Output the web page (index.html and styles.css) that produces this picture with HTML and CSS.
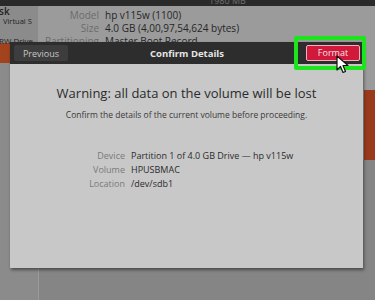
FILE: index.html
```html
<!DOCTYPE html>
<html lang="en">
<head>
    <meta charset="UTF-8">
    <meta name="viewport" content="width=device-width, initial-scale=1.0">
    <title>Confirm Details - Disks</title>
    <link rel="stylesheet" href="styles.css">
</head>
<body>
    <div class="topbar"><span>1980 MB</span></div>

    <div class="app">
        <div class="sidebar">
            <div class="drive">
                <div class="drive-name">Disk</div>
                <div class="drive-sub">Virtual S</div>
            </div>
            <div class="drive drive-cd">
                <div class="drive-name">RW Drive</div>
            </div>
            <div class="drive selected"></div>
        </div>

        <div class="main">
            <div class="info">
                <div class="info-row"><span class="info-label">Model</span><span class="info-value">hp v115w (1100)</span></div>
                <div class="info-row"><span class="info-label">Size</span><span class="info-value">4.0 GB (4,00,97,54,624 bytes)</span></div>
                <div class="info-row"><span class="info-label">Partitioning</span><span class="info-value">Master Boot Record</span></div>
            </div>
            <div class="volumes">
                <div class="volume"></div>
            </div>
        </div>
    </div>

    <div class="dialog">
        <div class="dialog-header">
            <button class="btn btn-prev">Previous</button>
            <div class="dialog-title">Confirm Details</div>
            <button class="btn btn-format">Format</button>
        </div>
        <div class="dialog-body">
            <h1 class="warning">Warning: all data on the volume will be lost</h1>
            <p class="note">Confirm the details of the current volume before proceeding.</p>

            <div class="details">
                <span class="label">Device</span><span class="value">Partition 1 of 4.0 GB Drive — hp v115w</span>
                <span class="label">Volume</span><span class="value">HPUSBMAC</span>
                <span class="label">Location</span><span class="value">/dev/sdb1</span>
            </div>
        </div>
    </div>

    <!-- highlight drawn over the screenshot -->
    <div class="highlight"></div>

    <svg class="cursor" width="13" height="19" viewBox="0 0 13 19">
        <path d="M1 1 L1 15 L4.5 11.5 L7 17.5 L9.5 16.5 L7 10.5 L12 10.5 Z" fill="#fff" stroke="#111" stroke-width="1.2" stroke-linejoin="round"/>
    </svg>
</body>
</html>
```

FILE: styles.css
```css
* {
    margin: 0;
    padding: 0;
    box-sizing: border-box;
}

body {
    font-family: 'Open Sans', 'DejaVu Sans', sans-serif;
    background: #858585;
    width: 375px;
    height: 300px;
    overflow: hidden;
    position: relative;
}

.topbar {
    height: 6px;
    background: #2a2a2a;
    color: #6f6f6f;
    font-size: 9px;
    line-height: 1px;
    text-align: center;
    overflow: hidden;
    padding-left: 80px;
}

.app {
    display: flex;
    height: 294px;
}

.sidebar {
    width: 39px;
    flex-shrink: 0;
    background: #8b8b8b;
    border-right: 1px solid #9a9a9a;
    overflow: hidden;
}

.drive {
    white-space: nowrap;
    color: #1f1f1f;
}

.drive-name {
    font-size: 10px;
    font-weight: 600;
    line-height: 11px;
    margin-left: -11px;
}

.drive-sub {
    font-size: 7.5px;
    line-height: 9px;
    padding-left: 3px;
}

.drive-cd {
    margin-top: 10px;
}

.drive-cd .drive-name {
    font-size: 8px;
    font-weight: 400;
    line-height: 9px;
    margin-left: -1px;
}

.drive.selected {
    height: 20px;
    margin-top: -2px;
    background: #a3431e;
}

.main {
    flex: 1;
    display: flex;
    flex-direction: column;
}

.info {
    background: #9b9b9b;
    padding-top: 3px;
    height: 84px;
}

.info-row {
    display: flex;
    gap: 6px;
    font-size: 10px;
    line-height: 13px;
    white-space: nowrap;
}

.info-label {
    width: 60px;
    text-align: right;
    color: #6b6b6b;
}

.info-value {
    color: #262626;
}

.volumes {
    background: #9b9b9b;
    height: 70px;
    display: flex;
    justify-content: flex-end;
}

.volume {
    width: 11px;
    background: #9a3a1d;
}

.dialog {
    position: absolute;
    left: 10px;
    top: 42px;
    width: 353px;
    height: 226px;
    background: #c8c8c8;
    box-shadow: 1px 2px 3px rgba(0,0,0,0.45);
}

.dialog-header {
    height: 22px;
    background: #2d2d2d;
    display: flex;
    align-items: center;
    padding: 0 3px 0 4px;
}

.btn {
    font-family: inherit;
    font-size: 9px;
    border: none;
    border-radius: 2px;
    height: 16px;
    width: 54px;
}

.btn-prev {
    background: #3d3d3d;
    color: #c8c8c8;
}

.btn-format {
    background: #d0193b;
    color: #f4e4e6;
    border: 1px solid #f0b0bc;
    margin-top: -1px;
}

.dialog-title {
    flex: 1;
    text-align: center;
    color: #e6e6e6;
    font-size: 9.5px;
    font-weight: 700;
}

.dialog-body {
    text-align: center;
    padding-top: 20px;
}

.warning {
    font-size: 13px;
    font-weight: 400;
    color: #2b2b2b;
    line-height: 18px;
}

.note {
    font-size: 8.5px;
    color: #3a3a3a;
    margin-top: 7px;
}

.details {
    display: grid;
    grid-template-columns: 115px 1fr;
    column-gap: 6px;
    text-align: left;
    font-size: 9px;
    line-height: 14px;
    margin-top: 29px;
}

.details .label {
    text-align: right;
    color: #7a7a7a;
}

.details .value {
    color: #2b2b2b;
}

.highlight {
    position: absolute;
    left: 294px;
    top: 36px;
    width: 72px;
    height: 34px;
    border: 4px solid #1ee41e;
    border-radius: 2px;
}

.cursor {
    position: absolute;
    left: 336px;
    top: 55px;
}
```
